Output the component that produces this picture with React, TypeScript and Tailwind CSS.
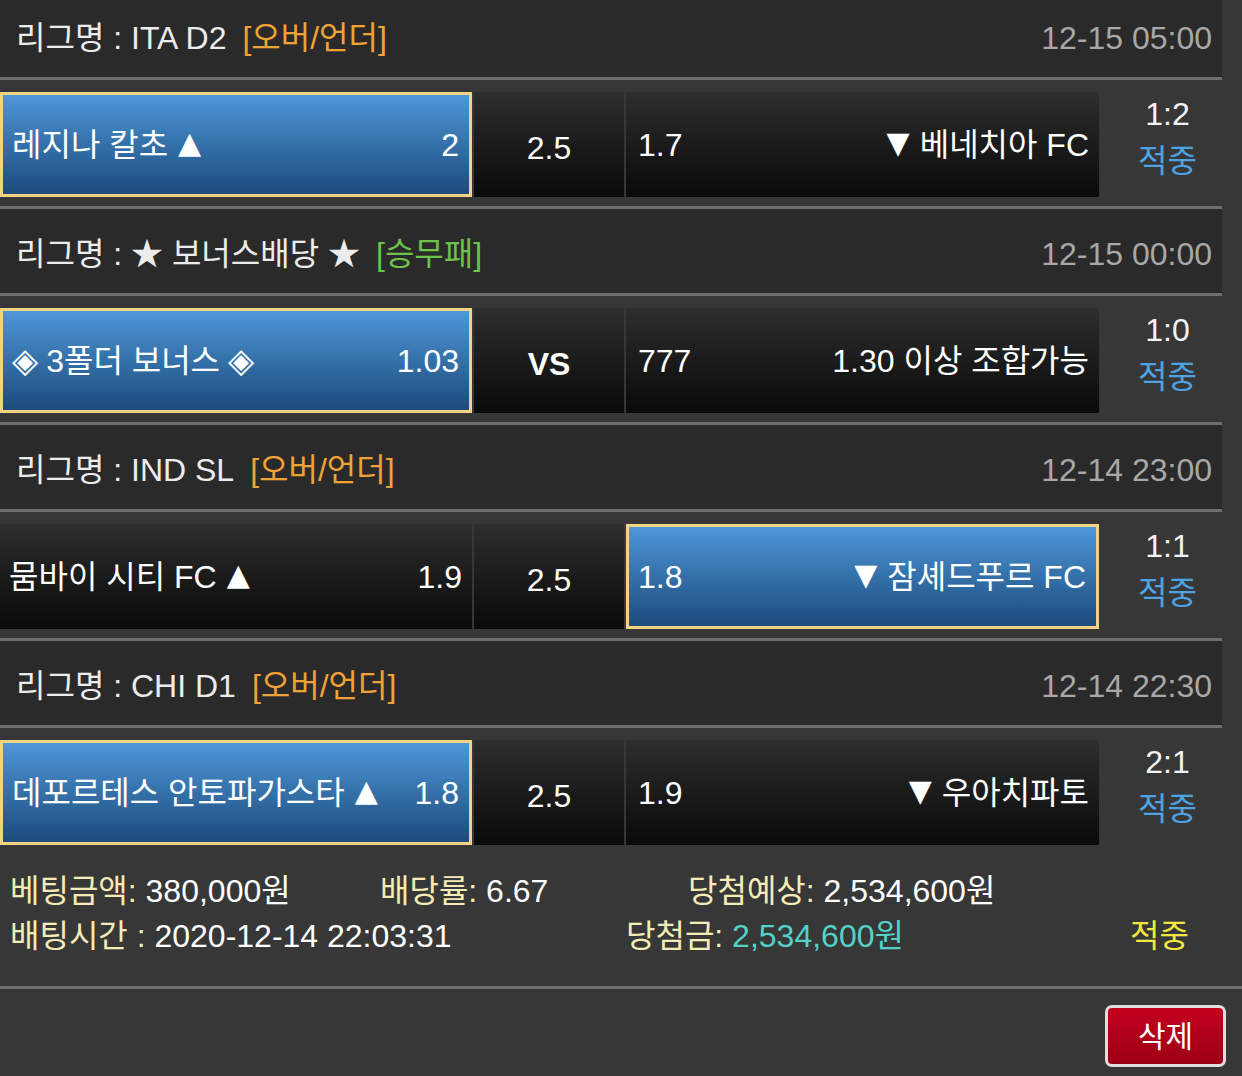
const games = [
  {
    league: "ITA D2",
    tag: "[오버/언더]",
    tagClass: "text-[#f0a236]",
    time: "12-15 05:00",
    home: ["레지나 칼초", "▲"],
    homeOdds: "2",
    mid: "2.5",
    awayOdds: "1.7",
    away: ["▼", "베네치아 FC"],
    score: "1:2",
    pick: "home",
  },
  {
    league: "★ 보너스배당 ★",
    tag: "[승무패]",
    tagClass: "text-[#6cc24a]",
    time: "12-15 00:00",
    home: ["◈ 3폴더 보너스 ◈", ""],
    homeOdds: "1.03",
    mid: "VS",
    awayOdds: "777",
    away: ["", "1.30 이상 조합가능"],
    score: "1:0",
    pick: "home",
  },
  {
    league: "IND SL",
    tag: "[오버/언더]",
    tagClass: "text-[#f0a236]",
    time: "12-14 23:00",
    home: ["뭄바이 시티 FC", "▲"],
    homeOdds: "1.9",
    mid: "2.5",
    awayOdds: "1.8",
    away: ["▼", "잠셰드푸르 FC"],
    score: "1:1",
    pick: "away",
  },
  {
    league: "CHI D1",
    tag: "[오버/언더]",
    tagClass: "text-[#f0a236]",
    time: "12-14 22:30",
    home: ["데포르테스 안토파가스타", "▲"],
    homeOdds: "1.8",
    mid: "2.5",
    awayOdds: "1.9",
    away: ["▼", "우아치파토"],
    score: "2:1",
    pick: "home",
  },
];

const darkCell = "bg-linear-to-b from-[#2e2e2e] to-[#0a0a0a]";
const blueCell =
  "bg-linear-to-b from-[#4e97d8] to-[#1c4c7c] border-[3px] border-[#f2d383]";

// triangles are drawn smaller than the CJK fallback would give
function Tri({ ch }: { ch: string }) {
  if (!ch) return null;
  return (
    <span className="font-['DejaVu_Sans',sans-serif] text-[30px] relative -top-[2px]">
      {ch}
    </span>
  );
}

function Diamond() {
  return <span className="font-['DejaVu_Sans',sans-serif] text-[34px]">◈</span>;
}

function HomeLabel({ parts }: { parts: string[] }) {
  if (parts[0].startsWith("◈")) {
    return (
      <span className="flex items-center gap-[8px]">
        <Diamond />
        <span>3폴더 보너스</span>
        <Diamond />
      </span>
    );
  }
  return (
    <span className="flex items-center gap-[10px]">
      <span>{parts[0]}</span>
      <Tri ch={parts[1]} />
    </span>
  );
}

function GameBlock({ g, last }: { g: (typeof games)[number]; last: boolean }) {
  return (
    <div>
      {/* league header */}
      <div className="w-[1222px] h-[87px] bg-[#2a2a2a] flex items-center justify-between pl-[16px] pr-[10px] pt-[6px] border-b-[3px] border-[#6e6e6e]">
        <div className="flex items-center text-[#ececec]">
          <span>리그명 : {g.league}</span>
          <span className={`ml-[16px] ${g.tagClass}`}>{g.tag}</span>
        </div>
        <span className="text-[#a8a8a8]">{g.time}</span>
      </div>

      {/* match row */}
      <div
        className={`w-[1222px] flex pt-[12px] ${
          last ? "pb-0" : "pb-[9px] border-b-[3px] border-[#6e6e6e]"
        }`}
      >
        <div
          className={`w-[472px] h-[105px] flex items-center justify-between ${
            g.pick === "home" ? `${blueCell} pl-[9px] pr-[10px]` : `${darkCell} pl-[9px] pr-[10px]`
          }`}
        >
          <HomeLabel parts={g.home} />
          <span>{g.homeOdds}</span>
        </div>
        <div className={`ml-[2px] w-[150px] h-[105px] flex items-center justify-center pt-[6px] ${darkCell}`}>
          <span className={g.mid === "VS" ? "font-bold" : ""}>{g.mid}</span>
        </div>
        <div
          className={`ml-[2px] w-[473px] h-[105px] flex items-center justify-between ${
            g.pick === "away" ? `${blueCell} pl-[9px] pr-[10px]` : `${darkCell} pl-[12px] pr-[10px]`
          }`}
        >
          <span>{g.awayOdds}</span>
          <span className="flex items-center gap-[10px]">
            <Tri ch={g.away[0]} />
            <span>{g.away[1]}</span>
          </span>
        </div>
        <div className="flex-1 flex flex-col items-center justify-center pl-[14px] -mt-[14px] leading-[47px]">
          <span className="text-[#f2f2f2]">{g.score}</span>
          <span className="text-[#4ea4e2]">적중</span>
        </div>
      </div>
    </div>
  );
}

export default function App() {
  return (
    <div className="w-[1242px] h-[1076px] overflow-hidden bg-[#373737] text-white text-[32px] font-['Liberation_Sans','Noto_Sans_CJK_KR',sans-serif]">
      <div className="-mt-[7px]">
        {games.map((g, i) => (
          <GameBlock key={i} g={g} last={i === games.length - 1} />
        ))}
      </div>

      {/* bet summary */}
      <div className="h-[144px] pt-[24px] pl-[10px] border-b-[3px] border-[#707070] text-[32px] leading-[45px]">
        <div className="flex">
          <div className="w-[370px]">
            <span className="text-[#f3ecb6]">베팅금액: </span>
            <span>380,000원</span>
          </div>
          <div className="w-[308px]">
            <span className="text-[#f3ecb6]">배당률: </span>
            <span>6.67</span>
          </div>
          <div>
            <span className="text-[#f3ecb6]">당첨예상: </span>
            <span>2,534,600원</span>
          </div>
        </div>
        <div className="flex">
          <div className="w-[616px]">
            <span className="text-[#f3ecb6]">배팅시간 : </span>
            <span>2020-12-14 22:03:31</span>
          </div>
          <div className="w-[504px]">
            <span className="text-[#f3ecb6]">당첨금: </span>
            <span className="text-[#52d2c8]">2,534,600원</span>
          </div>
          <span className="text-[#f2e640]">적중</span>
        </div>
      </div>

      {/* actions */}
      <div className="flex justify-end pt-[16px] pr-[16px]">
        <button className="w-[121px] h-[62px] rounded-[7px] border-[3px] border-[#dedede] bg-linear-to-b from-[#c4001f] to-[#9c0014] text-white text-[30px] flex items-center justify-center">
          삭제
        </button>
      </div>
    </div>
  );
}
